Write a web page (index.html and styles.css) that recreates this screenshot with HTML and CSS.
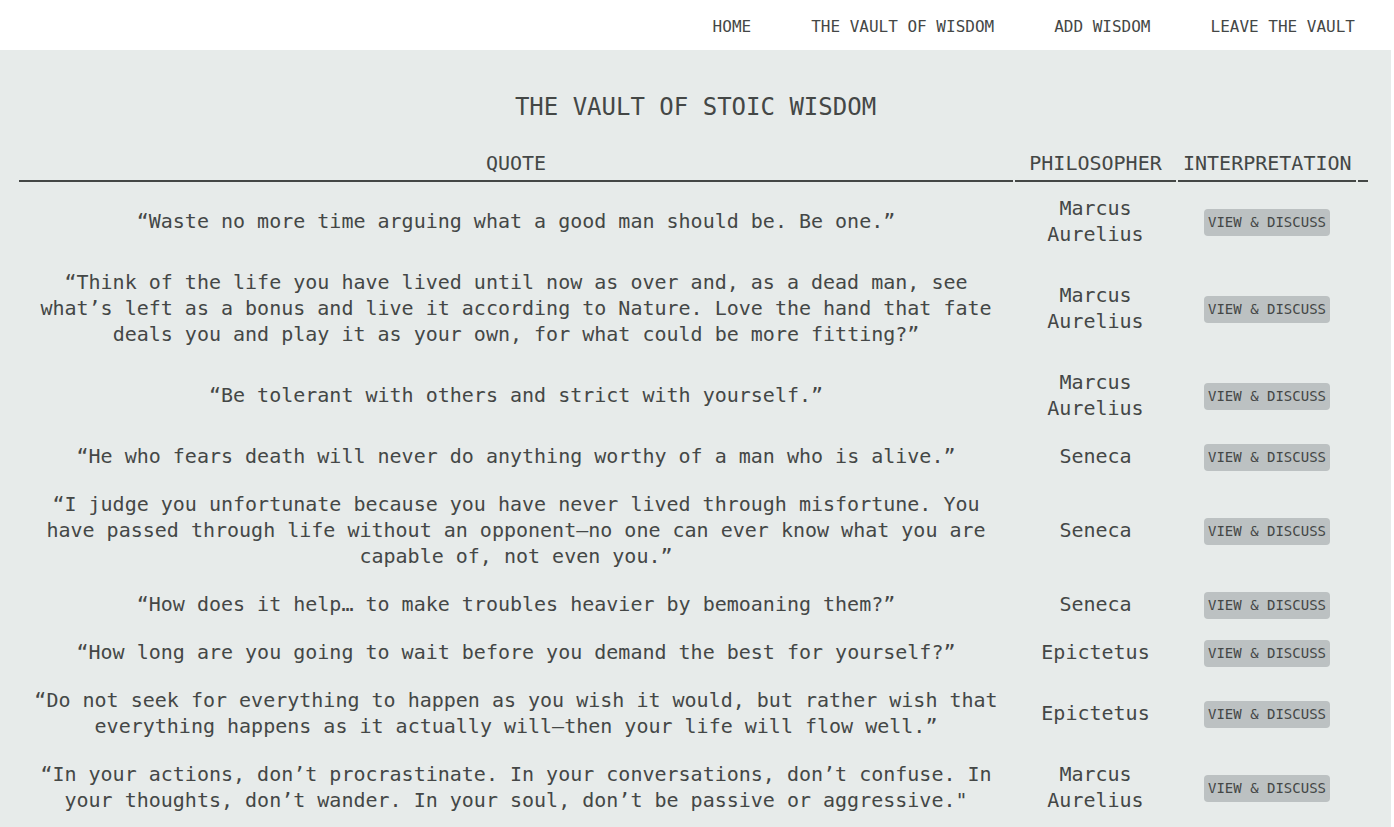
FILE: index.html
```html
<!DOCTYPE html>
<html lang="en">
<head>
<meta charset="utf-8">
<title>The Vault of Stoic Wisdom</title>
<link rel="stylesheet" href="styles.css">
</head>
<body>
<nav class="topnav">
  <a class="nav-link" href="#">HOME</a>
  <a class="nav-link" href="#">THE VAULT OF WISDOM</a>
  <a class="nav-link" href="#">ADD WISDOM</a>
  <a class="nav-link" href="#">LEAVE THE VAULT</a>
</nav>
<main class="vault">
  <h1 class="vault-title">THE VAULT OF STOIC WISDOM</h1>
  <table class="wisdom-table">
    <thead>
      <tr>
        <th class="col-quote">QUOTE</th>
        <th class="col-phil">PHILOSOPHER</th>
        <th class="col-interp">INTERPRETATION</th>
        <th class="col-extra"></th>
      </tr>
    </thead>
    <tbody>
      <tr>
        <td class="quote">“Waste no more time arguing what a good man should be. Be one.”</td>
        <td class="phil">Marcus Aurelius</td>
        <td class="interp"><button class="btn">VIEW &amp; DISCUSS</button></td>
        <td></td>
      </tr>
      <tr>
        <td class="quote">“Think of the life you have lived until now as over and, as a dead man, see what’s left as a bonus and live it according to Nature. Love the hand that fate deals you and play it as your own, for what could be more fitting?”</td>
        <td class="phil">Marcus Aurelius</td>
        <td class="interp"><button class="btn">VIEW &amp; DISCUSS</button></td>
        <td></td>
      </tr>
      <tr>
        <td class="quote">“Be tolerant with others and strict with yourself.”</td>
        <td class="phil">Marcus Aurelius</td>
        <td class="interp"><button class="btn">VIEW &amp; DISCUSS</button></td>
        <td></td>
      </tr>
      <tr>
        <td class="quote">“He who fears death will never do anything worthy of a man who is alive.”</td>
        <td class="phil">Seneca</td>
        <td class="interp"><button class="btn">VIEW &amp; DISCUSS</button></td>
        <td></td>
      </tr>
      <tr>
        <td class="quote">“I judge you unfortunate because you have never lived through misfortune. You have passed through life without an opponent—no one can ever know what you are capable of, not even you.”</td>
        <td class="phil">Seneca</td>
        <td class="interp"><button class="btn">VIEW &amp; DISCUSS</button></td>
        <td></td>
      </tr>
      <tr>
        <td class="quote">“How does it help… to make troubles heavier by bemoaning them?”</td>
        <td class="phil">Seneca</td>
        <td class="interp"><button class="btn">VIEW &amp; DISCUSS</button></td>
        <td></td>
      </tr>
      <tr>
        <td class="quote">“How long are you going to wait before you demand the best for yourself?”</td>
        <td class="phil">Epictetus</td>
        <td class="interp"><button class="btn">VIEW &amp; DISCUSS</button></td>
        <td></td>
      </tr>
      <tr>
        <td class="quote">“Do not seek for everything to happen as you wish it would, but rather wish that everything happens as it actually will—then your life will flow well.”</td>
        <td class="phil">Epictetus</td>
        <td class="interp"><button class="btn">VIEW &amp; DISCUSS</button></td>
        <td></td>
      </tr>
      <tr>
        <td class="quote">“In your actions, don’t procrastinate. In your conversations, don’t confuse. In your thoughts, don’t wander. In your soul, don’t be passive or aggressive."</td>
        <td class="phil">Marcus Aurelius</td>
        <td class="interp"><button class="btn">VIEW &amp; DISCUSS</button></td>
        <td></td>
      </tr>
    </tbody>
  </table>
</main>
</body>
</html>
```
FILE: styles.css
```css
* {
  box-sizing: border-box;
}

html, body {
  margin: 0;
  padding: 0;
  background: #ffffff;
}

body {
  font-family: "DejaVu Sans Mono", "Liberation Mono", monospace;
  color: #444746;
}

.topnav {
  height: 50px;
  display: flex;
  justify-content: flex-end;
  align-items: center;
  gap: 60px;
  padding: 3px 39px 0 0;
  background: #ffffff;
}

.nav-link {
  font-size: 16px;
  line-height: 20px;
  color: #444746;
  text-decoration: none;
}

.vault {
  margin-right: 3px;
  background: #e7ebea;
  padding: 41px 0 10px;
  min-height: 777px;
}

.vault-title {
  margin: 0;
  font-size: 24px;
  line-height: 32px;
  font-weight: normal;
  text-align: center;
  color: #444746;
}

.wisdom-table {
  margin: 15px 0 0 17px;
  width: 1353px;
  table-layout: fixed;
  border-collapse: separate;
  border-spacing: 2px;
}

.wisdom-table th {
  font-size: 20px;
  line-height: 26px;
  font-weight: normal;
  padding: 10px 5px 4px;
  border-bottom: 2px solid #444746;
  text-align: center;
  white-space: nowrap;
  color: #444746;
}

.col-quote { width: 994px; }
.col-phil { width: 161px; }
.col-interp { width: 178px; }
.col-extra { width: 10px; }

.wisdom-table td {
  font-size: 20px;
  line-height: 26px;
  padding: 10px;
  text-align: center;
  vertical-align: middle;
  color: #444746;
}

.wisdom-table td.quote,
.wisdom-table td.phil {
  padding-top: 11px;
  padding-bottom: 9px;
}

.wisdom-table td.interp {
  padding: 11px 0 7px;
}

.btn {
  display: block;
  margin: 1px auto 0;
  font-family: "DejaVu Sans Mono", "Liberation Mono", monospace;
  font-size: 14px;
  line-height: 19px;
  padding: 4px 4px;
  border: none;
  border-radius: 4px;
  background: #bcc1c2;
  color: #444746;
  cursor: pointer;
}
```
